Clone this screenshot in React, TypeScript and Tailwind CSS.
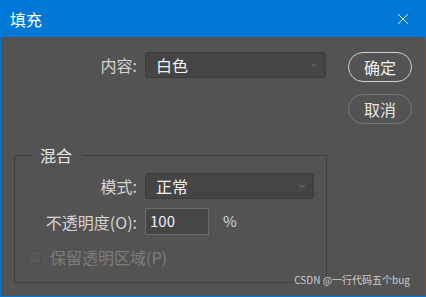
import { ChevronDown, X } from 'lucide-react';

const font = { fontFamily: '"Noto Sans CJK SC", "Liberation Sans", sans-serif' };

function Select({ value, width }: { value: string; width: string }) {
  return (
    <div
      className={`${width} h-[26px] flex items-center justify-between pl-[10px] pr-[6px] bg-[#454545] border border-[#3b3b3b] rounded-[3px] text-[#f2f2f2] text-[16px]`}
    >
      <span>{value}</span>
      <ChevronDown size={10} strokeWidth={1.5} className="text-[#9a9a9a]" />
    </div>
  );
}

export default function App() {
  return (
    <div
      className="w-[426px] h-[297px] flex flex-col bg-[#535353] border-x border-b border-[#0078d7] overflow-hidden"
      style={font}
    >
      {/* Title bar */}
      <div className="h-[37px] shrink-0 bg-[#0078d7] flex items-center justify-between pl-[10px] pr-[14px] -mx-px">
        <span className="text-white text-[16px]">填充</span>
        <X size={18} strokeWidth={1.3} className="text-white" />
      </div>

      <div className="relative flex-1 flex">
        {/* Left part */}
        <div className="w-[326px] flex flex-col">
          <div className="mt-[15px] flex items-center">
            <div className="w-[136px] text-right text-[16px] leading-[20px] text-[#d4d4d4]">内容:</div>
            <div className="ml-[8px]">
              <Select value="白色" width="w-[181px]" />
            </div>
          </div>

          <fieldset className="mt-[67px] ml-[13px] h-[138px] border border-[#404040] rounded-[1px]">
            <legend className="ml-[18px] pl-[7px] pr-[10px] text-[16px] leading-[20px] text-[#e8e8e8]">混合</legend>
            <div className="flex flex-col">
              <div className="mt-[8px] flex items-center">
                <div className="w-[122px] text-right text-[16px] leading-[20px] text-[#d4d4d4]">模式:</div>
                <div className="ml-[8px]">
                  <Select value="正常" width="w-[169px]" />
                </div>
              </div>
              <div className="mt-[9px] flex items-center">
                <div className="w-[122px] text-right text-[16px] leading-[20px] text-[#d4d4d4]">不透明度(O):</div>
                <div className="ml-[8px] w-[64px] h-[27px] border border-[#6a6a6a] bg-[#464646] flex items-center pl-[4px] text-[15px] text-[#eef3ff]">
                  100
                </div>
                <span className="ml-[14px] text-[15px] text-[#c9d8e0]">%</span>
              </div>
              <div className="mt-[12px] flex items-center pl-[12px]">
                <div className="w-[14px] h-[14px] border border-[#4e4e4e] bg-[#565656] rounded-[1px]" />
                <span className="ml-[9px] text-[16px] leading-[20px] text-[#7c7c7c]">保留透明区域(P)</span>
              </div>
            </div>
          </fieldset>
        </div>

        {/* Buttons */}
        <div className="ml-[21px] mt-[15px] flex flex-col gap-[12px]">
          <button className="w-[64px] h-[30px] rounded-full border border-[#d0d0d0] text-[16px] text-[#f2f2f2]">
            确定
          </button>
          <button className="w-[64px] h-[30px] rounded-full border border-[#747474] text-[16px] text-[#e6e6e6]">
            取消
          </button>
        </div>

        <span className="absolute right-[15px] bottom-[9px] text-[10px] text-[#d0d0d0]">CSDN @一行代码五个bug</span>
      </div>
    </div>
  );
}
